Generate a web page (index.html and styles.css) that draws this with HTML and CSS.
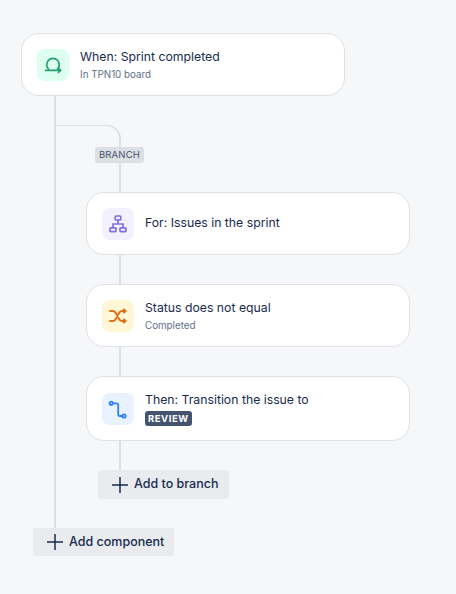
FILE: index.html
```html
<!DOCTYPE html>
<html lang="en">
<head>
<meta charset="utf-8">
<title>Automation rule</title>
<link rel="stylesheet" href="styles.css">
</head>
<body>
<main class="rule">
  <section class="card">
    <div class="icon icon-green">
      <svg viewBox="0 0 20 20" width="20" height="20"><path d="M6 14.6A6.3 6.3 0 1 1 14.2 14.4" fill="none" stroke="#22a06b" stroke-width="1.7"/><path d="M2 15.3H17.4M15 12.8l2.6 2.5-2.6 2.5" fill="none" stroke="#22a06b" stroke-width="1.7"/></svg>
    </div>
    <div class="text text-pair">
      <div class="title">When: Sprint completed</div>
      <div class="sub">In TPN10 board</div>
    </div>
  </section>
  <div class="trunk">
    <div class="elbow"></div>
    <div class="badge">BRANCH</div>
    <div class="stem"></div>
    <div class="branch">
      <section class="card">
        <div class="icon icon-purple">
          <svg viewBox="0 0 20 20" width="20" height="20"><g fill="none" stroke="#8270db" stroke-width="1.7"><rect x="7.2" y="2" width="5.6" height="4" rx=".8"/><rect x="2" y="13.8" width="6" height="3.8" rx=".8"/><rect x="12" y="13.8" width="6" height="3.8" rx=".8"/><path d="M10 6v4M5 13.8V10h10v3.8"/></g></svg>
        </div>
        <div class="text text-single"><div class="title">For: Issues in the sprint</div></div>
      </section>
      <div class="link"></div>
      <section class="card">
        <div class="icon icon-yellow">
          <svg viewBox="0 0 20 20" width="20" height="20"><g fill="none" stroke="#e56910" stroke-width="1.8"><path d="M1.4 5h3.2c1.4 0 2.4.8 3 1.8l3.6 6.4c.6 1 1.6 1.8 3 1.8h3.6M1.4 15h3.2c1.4 0 2.4-.8 3-1.8l3.6-6.4c.6-1 1.6-1.8 3-1.8h3.6"/><path d="M15.4 2.8L17.6 5l-2.2 2.2M15.4 12.8l2.2 2.2-2.2 2.2"/></g></svg>
        </div>
        <div class="text text-pair">
          <div class="title">Status does not equal</div>
          <div class="sub">Completed</div>
        </div>
      </section>
      <div class="link"></div>
      <section class="card card-tall">
        <div class="icon icon-blue">
          <svg viewBox="0 0 20 20" width="20" height="20"><g fill="none" stroke="#2f80ff" stroke-width="1.8"><circle cx="3.2" cy="4.3" r="1.7"/><circle cx="16" cy="17" r="1.7"/><path d="M4.9 4.3H8.6a1.6 1.6 0 0 1 1.6 1.6v9.5A1.6 1.6 0 0 0 11.8 17h2.5"/></g></svg>
        </div>
        <div class="text">
          <div class="title">Then: Transition the issue to</div>
          <div class="status">REVIEW</div>
        </div>
      </section>
      <div class="link"></div>
      <button class="add add-branch" type="button">
        <svg viewBox="0 0 16 16" width="16" height="16"><path d="M8 0v16M0 8h16" stroke="#172b4d" stroke-width="1.5"/></svg>
        <span class="label">Add to branch</span>
      </button>
    </div>
  </div>
  <button class="add add-component" type="button">
    <svg viewBox="0 0 16 16" width="16" height="16"><path d="M8 0v16M0 8h16" stroke="#172b4d" stroke-width="1.5"/></svg>
    <span class="label">Add component</span>
  </button>
</main>
</body>
</html>
```
FILE: styles.css
```css
* { box-sizing: border-box; }
html, body { margin: 0; height: 100%; }
body {
  background: #f6f7f9;
  color: #172b4d;
  font-family: Inter, "Liberation Sans", sans-serif;
  overflow: hidden;
}
.rule { padding: 33px 0 0 21px; }
.card {
  width: 324px;
  height: 63px;
  display: flex;
  align-items: center;
  gap: 11px;
  padding: 0 15px;
  background: #fff;
  border: 1px solid #dfe1e6;
  border-radius: 18px;
}
.card-tall { height: 65px; }
.icon {
  width: 32px;
  height: 32px;
  flex: none;
  display: flex;
  align-items: center;
  justify-content: center;
  border-radius: 8px;
}
.icon-green { background: #dcfff1; }
.icon-purple { background: #f3f0ff; }
.icon-yellow { background: #fff7d6; }
.icon-blue { background: #e9f2ff; }
.text-pair { padding-top: 1px; }
.text-single { padding-bottom: 2px; }
.title { font-size: 12.25px; line-height: 16px; }
.sub { font-size: 9.8px; line-height: 12px; margin-top: 4px; color: #626f86; }
.status {
  display: table;
  margin-top: 3px;
  padding: 0 3px;
  height: 15px;
  line-height: 15px;
  font-size: 9.5px;
  font-weight: 700;
  letter-spacing: .55px;
  color: #fff;
  background: #44546f;
  border-radius: 3px;
}
.trunk {
  margin-left: 33px;
  height: 432px;
  border-left: 2px solid #dcdfe4;
  padding-top: 29px;
}
.elbow {
  width: 65px;
  height: 22px;
  border-top: 1px solid #dcdfe4;
  border-right: 2px solid #dcdfe4;
  border-top-right-radius: 14px;
}
.badge {
  width: 49px;
  height: 16px;
  margin-left: 39px;
  line-height: 16px;
  text-align: center;
  font-size: 9.5px;
  letter-spacing: .2px;
  color: #44546f;
  background: #dcdfe4;
  border-radius: 3px;
}
.stem {
  width: 2px;
  height: 29px;
  margin-left: 63px;
  background: #dcdfe4;
}
.branch { margin-left: 30px; }
.link {
  width: 2px;
  height: 29px;
  margin-left: 33px;
  background: #dcdfe4;
}
.add {
  display: flex;
  align-items: center;
  gap: 6px;
  padding: 0 0 0 14px;
  border: 0;
  border-radius: 3px;
  background: #e9ebef;
  color: #172b4d;
  font-family: inherit;
  font-size: 12.5px;
  font-weight: 450;
}
.label { padding-bottom: 2px; }
.add-branch { width: 131px; height: 29px; margin-left: 12px; }
.add-component { width: 141px; height: 28px; margin-left: 12px; }
```
